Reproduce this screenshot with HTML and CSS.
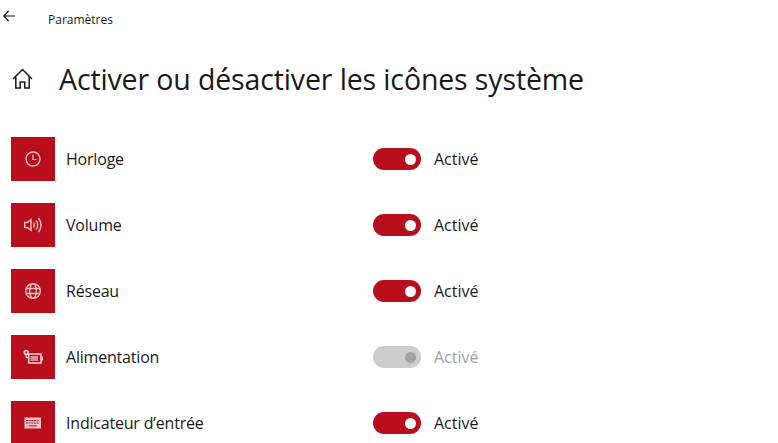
FILE: index.html
```html
<!DOCTYPE html>
<html lang="fr">
<head>
    <meta charset="UTF-8">
    <meta name="viewport" content="width=device-width, initial-scale=1.0">
    <title>Paramètres</title>
    <link rel="stylesheet" href="styles.css">
</head>
<body>
    <header class="title-bar">
        <svg class="back-icon" xmlns="http://www.w3.org/2000/svg" viewBox="0 0 12 12" width="12" height="12">
            <path d="M12 6H.8M5.600 1 .8 6l4.800 5" fill="none" stroke="#111" stroke-width="1.200"/>
        </svg>
        <span class="app-name">Paramètres</span>
    </header>

    <div class="page-head">
        <svg class="home-icon" xmlns="http://www.w3.org/2000/svg" viewBox="0 0 22 22" width="22" height="22">
            <path d="M2 11 11.500 1.500 21 11M4.800 8.500V20H9.200V14H13.800V20H18.200V8.500" fill="none" stroke="#1a1a1a" stroke-width="1.500"/>
        </svg>
        <h1>Activer ou désactiver les icônes système</h1>
    </div>

    <ul class="icon-list">
        <li class="icon-row">
            <div class="tile">
                <svg xmlns="http://www.w3.org/2000/svg" viewBox="0 0 18 18" width="18" height="18">
                    <circle cx="9" cy="9" r="7" fill="none" stroke="#f3c4c8" stroke-width="1.400"/>
                    <path d="M9 4.500V9.500H12.500" fill="none" stroke="#f3c4c8" stroke-width="1.200"/>
                </svg>
            </div>
            <span class="row-label">Horloge</span>
            <div class="switch"><span class="knob"></span></div>
            <span class="state">Activé</span>
        </li>
        <li class="icon-row">
            <div class="tile">
                <svg xmlns="http://www.w3.org/2000/svg" viewBox="0 0 20 18" width="20" height="18">
                    <path d="M1.700 6.500H4.300L8 3.700V14.300L4.300 11.500H1.700Z" fill="none" stroke="#f3c4c8" stroke-width="1.400"/>
                    <path d="M10.500 6.500q1.500 2.500 0 5M13 4.300q3.300 4.700 0 9.400M15.500 2q5 7 0 14" fill="none" stroke="#f3c4c8" stroke-width="1.400"/>
                </svg>
            </div>
            <span class="row-label">Volume</span>
            <div class="switch"><span class="knob"></span></div>
            <span class="state">Activé</span>
        </li>
        <li class="icon-row">
            <div class="tile">
                <svg xmlns="http://www.w3.org/2000/svg" viewBox="0 0 18 18" width="18" height="18">
                    <circle cx="9" cy="9" r="7.300" fill="none" stroke="#f3c4c8" stroke-width="1.400"/>
                    <ellipse cx="9" cy="9" rx="3.300" ry="7.300" fill="none" stroke="#f3c4c8" stroke-width="1.300"/>
                    <path d="M2 6.500H16M2 11.500H16" fill="none" stroke="#f3c4c8" stroke-width="1.300"/>
                </svg>
            </div>
            <span class="row-label">Réseau</span>
            <div class="switch"><span class="knob"></span></div>
            <span class="state">Activé</span>
        </li>
        <li class="icon-row">
            <div class="tile">
                <svg xmlns="http://www.w3.org/2000/svg" viewBox="0 0 20 16" width="20" height="16">
                    <path d="M5.700 5H18V14H5.700Z" fill="none" stroke="#f6d5d8" stroke-width="1.500"/>
                    <path d="M7.500 7H15V12H7.500Z" fill="#f3c4c8" opacity=".7"/>
                    <path d="M18.500 7.500H20V11.500H18.500Z" fill="#f6d5d8"/>
                    <circle cx="3.200" cy="3.500" r="2.700" fill="#f6d5d8"/>
                    <circle cx="3.200" cy="3.500" r="1" fill="#b90e1c"/>
                    <path d="M3.200 6V8.500H5.500" fill="none" stroke="#f6d5d8" stroke-width="1.300"/>
                </svg>
            </div>
            <span class="row-label">Alimentation</span>
            <div class="switch switch-off"><span class="knob"></span></div>
            <span class="state state-off">Activé</span>
        </li>
        <li class="icon-row">
            <div class="tile">
                <svg xmlns="http://www.w3.org/2000/svg" viewBox="0 0 18 14" width="18" height="14">
                    <path d="M.5 1.500H17V12.500H.5Z" fill="#f3c4c8"/>
                    <path d="M2 4.500H15.500M2 7H15.500" stroke="#b90e1c" stroke-width="1" stroke-dasharray="2 .7"/>
                    <path d="M4.500 9.800H13" stroke="#b90e1c" stroke-width="1"/>
                </svg>
            </div>
            <span class="row-label">Indicateur d’entrée</span>
            <div class="switch"><span class="knob"></span></div>
            <span class="state">Activé</span>
        </li>
    </ul>
</body>
</html>
```

FILE: styles.css
```css
html, body {
    height: 100%;
}

body {
    margin: 0;
    overflow: hidden;
    background-color: white;
    color: #1a1a1a;
    font-family: "Open Sans", "Noto Sans", sans-serif;
}

/* Barre du haut */
.title-bar {
    display: flex;
    align-items: flex-start;
    height: 32px;
    padding: 0 0 0 3px;
}

.back-icon {
    margin-top: 10px;
}

.app-name {
    margin-left: 33px;
    margin-top: 11px;
    font-size: 12px;
}

/* Titre de la page */
.page-head {
    display: flex;
    align-items: center;
    height: 56px;
    margin-top: 19px;
    padding-left: 11px;
}

.page-head h1 {
    margin: 0 0 0 26px;
    font-size: 28.5px;
    font-weight: 400;
    letter-spacing: -0.13px;
    white-space: nowrap;
}

/* Liste des icones */
.icon-list {
    display: flex;
    flex-direction: column;
    gap: 22px;
    margin: 30px 0 0;
    padding: 0 0 0 11px;
    list-style: none;
}

.icon-row {
    display: flex;
    align-items: center;
    height: 44px;
}

.tile {
    display: flex;
    flex: none;
    align-items: center;
    justify-content: center;
    width: 44px;
    height: 44px;
    background-color: #b90e1c;
}

.row-label {
    width: 307px;
    margin-left: 11px;
    font-size: 16px;
    letter-spacing: -0.2px;
}

.switch {
    display: flex;
    align-items: center;
    justify-content: flex-end;
    box-sizing: border-box;
    width: 48px;
    height: 22px;
    padding-right: 5px;
    border-radius: 11px;
    background-color: #b90e1c;
}

.knob {
    width: 11px;
    height: 11px;
    border-radius: 50%;
    background-color: white;
}

.switch-off {
    background-color: #cccccc;
}

.switch-off .knob {
    background-color: #a3a3a3;
}

.state {
    margin-left: 13px;
    font-size: 16px;
}

.state-off {
    color: #a0a0a0;
}
```
